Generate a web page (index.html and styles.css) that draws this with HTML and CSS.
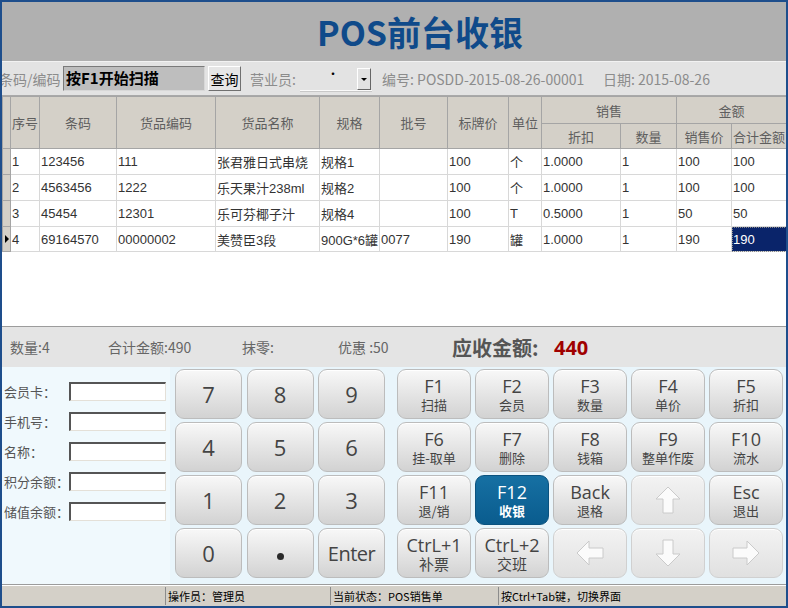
FILE: index.html
```html
<!DOCTYPE html>
<html lang="zh-CN">
<head>
  <meta charset="UTF-8">
  <title>POS前台收银</title>
  <link rel="stylesheet" href="styles.css">
</head>
<body>
<div class="ventana">
  <div class="cabecera"><h1>POS前台收银</h1></div>

  <div class="barra">
    <span class="lbl-codigo">条码/编码</span>
    <div class="caja-scan">按F1开始扫描</div>
    <button class="btn-consulta">查询</button>
    <span class="lbl-vendedor">营业员:</span>
    <div class="combo"><span class="combo-punto">·</span><span class="combo-btn"></span></div>
    <span class="lbl-numero">编号: POSDD-2015-08-26-00001</span>
    <span class="lbl-fecha">日期: 2015-08-26</span>
  </div>

  <div class="zona-tabla">
    <table class="tabla">
      <colgroup>
        <col style="width:8px"><col style="width:29px"><col style="width:77px"><col style="width:99px">
        <col style="width:104px"><col style="width:60px"><col style="width:68px"><col style="width:61px">
        <col style="width:33px"><col style="width:79px"><col style="width:56px"><col style="width:55px">
        <col style="width:55px">
      </colgroup>
      <thead>
        <tr class="h1">
          <th rowspan="2" class="ind"></th>
          <th rowspan="2">序号</th>
          <th rowspan="2">条码</th>
          <th rowspan="2">货品编码</th>
          <th rowspan="2">货品名称</th>
          <th rowspan="2">规格</th>
          <th rowspan="2">批号</th>
          <th rowspan="2">标牌价</th>
          <th rowspan="2">单位</th>
          <th colspan="2">销售</th>
          <th colspan="2">金额</th>
        </tr>
        <tr class="h2">
          <th>折扣</th>
          <th>数量</th>
          <th>销售价</th>
          <th>合计金额</th>
        </tr>
      </thead>
      <tbody>
        <tr>
          <td class="ind"></td><td>1</td><td>123456</td><td>111</td><td>张君雅日式串烧</td><td>规格1</td><td></td>
          <td>100</td><td>个</td><td>1.0000</td><td>1</td><td>100</td><td>100</td>
        </tr>
        <tr>
          <td class="ind"></td><td>2</td><td>4563456</td><td>1222</td><td>乐天果汁238ml</td><td>规格2</td><td></td>
          <td>100</td><td>个</td><td>1.0000</td><td>1</td><td>100</td><td>100</td>
        </tr>
        <tr>
          <td class="ind"></td><td>3</td><td>45454</td><td>12301</td><td>乐可芬椰子汁</td><td>规格4</td><td></td>
          <td>100</td><td>T</td><td>0.5000</td><td>1</td><td>50</td><td>50</td>
        </tr>
        <tr class="ultima">
          <td class="ind"><span class="flecha"></span></td><td>4</td><td>69164570</td><td>00000002</td><td>美赞臣3段</td><td>900G*6罐</td><td>0077</td>
          <td>190</td><td>罐</td><td>1.0000</td><td>1</td><td>190</td><td class="sel">190</td>
        </tr>
      </tbody>
    </table>
  </div>

  <div class="resumen">
    <span class="r-cant">数量:4</span>
    <span class="r-total">合计金额:490</span>
    <span class="r-redondeo">抹零:</span>
    <span class="r-desc">优惠 :50</span>
    <span class="r-cobrar">应收金额:</span>
    <span class="r-importe">440</span>
  </div>

  <div class="inferior">
    <div class="socio">
      <div class="fila"><label>会员卡：</label><input type="text"></div>
      <div class="fila"><label>手机号：</label><input type="text"></div>
      <div class="fila"><label>名称：</label><input type="text"></div>
      <div class="fila"><label>积分余额：</label><input type="text"></div>
      <div class="fila"><label>储值余额：</label><input type="text"></div>
    </div>
    <div class="teclado">
      <div class="numerico">
        <div class="tecla num">7</div>
        <div class="tecla num">8</div>
        <div class="tecla num">9</div>
        <div class="tecla num">4</div>
        <div class="tecla num">5</div>
        <div class="tecla num">6</div>
        <div class="tecla num">1</div>
        <div class="tecla num">2</div>
        <div class="tecla num">3</div>
        <div class="tecla num">0</div>
        <div class="tecla num"><span class="punto"></span></div>
        <div class="tecla num enter">Enter</div>
      </div>
      <div class="funciones">
        <div class="tecla"><span class="fk">F1</span><span class="sub">扫描</span></div>
        <div class="tecla"><span class="fk">F2</span><span class="sub">会员</span></div>
        <div class="tecla"><span class="fk">F3</span><span class="sub">数量</span></div>
        <div class="tecla"><span class="fk">F4</span><span class="sub">单价</span></div>
        <div class="tecla"><span class="fk">F5</span><span class="sub">折扣</span></div>
        <div class="tecla"><span class="fk">F6</span><span class="sub">挂-取单</span></div>
        <div class="tecla"><span class="fk">F7</span><span class="sub">删除</span></div>
        <div class="tecla"><span class="fk">F8</span><span class="sub">钱箱</span></div>
        <div class="tecla"><span class="fk">F9</span><span class="sub">整单作废</span></div>
        <div class="tecla"><span class="fk">F10</span><span class="sub">流水</span></div>
        <div class="tecla"><span class="fk">F11</span><span class="sub">退/销</span></div>
        <div class="tecla activa"><span class="fk">F12</span><span class="sub">收银</span></div>
        <div class="tecla"><span class="fk">Back</span><span class="sub">退格</span></div>
        <div class="tecla flecha-btn">
          <svg width="28" height="30" viewBox="0 0 28 30"><polygon points="14,2 26,14 19,14 19,28 9,28 9,14 2,14" fill="#fbfbfb" stroke="#cacaca"/></svg>
        </div>
        <div class="tecla"><span class="fk">Esc</span><span class="sub">退出</span></div>
        <div class="tecla ctrl"><span class="fk">CtrL+1</span><span class="sub">补票</span></div>
        <div class="tecla ctrl"><span class="fk">CtrL+2</span><span class="sub">交班</span></div>
        <div class="tecla flecha-btn">
          <svg width="30" height="28" viewBox="0 0 30 28"><polygon points="2,14 14,2 14,9 28,9 28,19 14,19 14,26" fill="#fbfbfb" stroke="#cacaca"/></svg>
        </div>
        <div class="tecla flecha-btn">
          <svg width="28" height="30" viewBox="0 0 28 30"><polygon points="14,28 26,16 19,16 19,2 9,2 9,16 2,16" fill="#fbfbfb" stroke="#cacaca"/></svg>
        </div>
        <div class="tecla flecha-btn">
          <svg width="30" height="28" viewBox="0 0 30 28"><polygon points="28,14 16,2 16,9 2,9 2,19 16,19 16,26" fill="#fbfbfb" stroke="#cacaca"/></svg>
        </div>
      </div>
    </div>
  </div>

  <div class="estado">
    <div class="celda c1"></div>
    <div class="celda c2">操作员：管理员</div>
    <div class="celda c3">当前状态：POS销售单</div>
    <div class="celda c4">按Ctrl+Tab键，切换界面</div>
  </div>
</div>
</body>
</html>
```

FILE: styles.css
```css
* {
  box-sizing: border-box;
}

body {
  margin: 0;
  font-family: "Noto Sans CJK SC", "Liberation Sans", sans-serif;
}

.ventana {
  width: 788px;
  height: 608px;
  border: 2px solid #1e4e8c;
  display: flex;
  flex-direction: column;
  overflow: hidden;
  background: #fff;
}

/* cabecera */
.cabecera {
  height: 60px;
  background: #b0b0b0;
  border-bottom: 1px solid #f2f2f2;
  display: flex;
  align-items: center;
  justify-content: center;
  padding-left: 52px;
}

h1 {
  margin: 0;
  font-size: 34px;
  line-height: 1;
  font-weight: bold;
  color: #0f4a8a;
}

/* barra de busqueda */
.barra {
  height: 34px;
  background: #e3e3e3;
  border-bottom: 1px solid #a9a9a9;
  display: flex;
  align-items: center;
  font-size: 14px;
  color: #8c8c8c;
  white-space: nowrap;
}

.lbl-codigo {
  margin-left: -3px;
  width: 64px;
}

.caja-scan {
  width: 142px;
  height: 25px;
  background: #bebebe;
  border: 1px solid #7a7a7a;
  border-right-color: #d8d8d8;
  border-bottom-color: #d8d8d8;
  color: #000;
  font-weight: bold;
  font-size: 15px;
  line-height: 22px;
  padding-left: 2px;
}

.btn-consulta {
  margin-left: 3px;
  width: 33px;
  height: 25px;
  padding: 0;
  font-family: inherit;
  font-size: 14px;
  color: #000;
  background: #e6e6e6;
  border: 1px solid;
  border-color: #fff #707070 #707070 #fff;
}

.lbl-vendedor {
  margin-left: 9px;
  width: 50px;
}

.combo {
  position: relative;
  width: 72px;
  height: 24px;
  border-bottom: 1px solid #fafafa;
  box-shadow: 0 1px 0 #c8c8c8;
}

.combo-punto {
  position: absolute;
  left: 27px;
  top: -2px;
  color: #000;
  font-size: 12px;
}

.combo-btn {
  position: absolute;
  right: 1px;
  top: 1px;
  width: 14px;
  height: 22px;
  background: #e2e2e2;
  border: 1px solid;
  border-color: #fff #666 #666 #fff;
}

.combo-btn::after {
  content: "";
  position: absolute;
  left: 3px;
  top: 9px;
  border-left: 3px solid transparent;
  border-right: 3px solid transparent;
  border-top: 3px solid #000;
}

.lbl-numero {
  margin-left: 10px;
  width: 221px;
}

/* tabla */
.zona-tabla {
  height: 230px;
  background: #fff;
}

.tabla {
  border-collapse: collapse;
  table-layout: fixed;
  width: 784px;
  font-family: "Liberation Sans", "Noto Sans CJK SC", sans-serif;
  font-size: 13px;
}

.tabla th {
  background: #d4d0c8;
  color: #5e5e5e;
  font-weight: normal;
  border: 1px solid #a5a5a5;
  padding: 0;
  white-space: nowrap;
  font-family: "Noto Sans CJK SC", sans-serif;
}

.tabla tr.h1 th {
  height: 27px;
}

.tabla tr.h2 th {
  height: 25px;
}

.tabla td {
  border: 1px solid #d8d8d8;
  height: 26px;
  padding: 0 0 0 1px;
  color: #333;
  white-space: nowrap;
  overflow: hidden;
}

.tabla tr.ultima td {
  height: 25px;
}

.tabla .ind {
  background: #d4d0c8;
  border-color: #a5a5a5;
  padding: 0;
}

.flecha {
  display: block;
  margin-left: 2px;
  border-top: 4px solid transparent;
  border-bottom: 4px solid transparent;
  border-left: 4px solid #000;
  width: 0;
}

.tabla td.sel {
  background: #0a246a;
  color: #fff;
  outline: 1px dotted #8a8a8a;
  outline-offset: -1px;
}

/* resumen */
.resumen {
  height: 41px;
  background: #e4e4e4;
  border-top: 1px solid #9c9c9c;
  display: flex;
  align-items: center;
  padding-left: 8px;
  font-size: 14px;
  color: #666;
  white-space: nowrap;
}

.r-cant { width: 98px; }
.r-total { width: 134px; }
.r-redondeo { width: 96px; }
.r-desc { width: 114px; }

.r-cobrar {
  width: 102px;
  font-size: 20px;
  font-weight: bold;
  color: #555;
}

.r-importe {
  font-size: 20px;
  font-weight: bold;
  color: #a00000;
  font-family: "Open Sans", sans-serif;
}

/* zona inferior */
.inferior {
  height: 217px;
  display: flex;
  background: #e9f5fb;
}

.socio {
  width: 168px;
  background: #f0f9fd;
  padding-top: 14px;
}

.fila {
  display: flex;
  align-items: center;
  height: 20px;
  margin-bottom: 10px;
}

.fila label {
  width: 67px;
  padding-left: 2px;
  font-size: 13px;
  color: #555;
  white-space: nowrap;
}

.fila input {
  width: 97px;
  height: 19px;
  padding: 0;
  background: #fff;
  border: 1px solid;
  border-color: #555 #e4e0d8 #e4e0d8 #555;
  border-width: 2px 1px 1px 2px;
}

.teclado {
  flex: 1;
  display: flex;
  padding: 2px 3px 0 5px;
}

.numerico {
  display: grid;
  grid-template-columns: repeat(3, 67px);
  grid-template-rows: repeat(4, 50px);
  column-gap: 4.5px;
  row-gap: 3px;
}

.funciones {
  margin-left: 12px;
  display: grid;
  grid-template-columns: repeat(5, 74px);
  grid-template-rows: repeat(4, 50px);
  column-gap: 4px;
  row-gap: 3px;
}

.tecla {
  border: 1px solid #bcbcbc;
  border-radius: 9px;
  background: linear-gradient(#f8f8f8, #d2d2d2);
  box-shadow: inset 0 1px 0 #fff;
  color: #444;
  display: flex;
  flex-direction: column;
  align-items: center;
  justify-content: center;
  font-family: "Open Sans", "Noto Sans CJK SC", sans-serif;
}

.num {
  font-size: 22px;
}

.punto {
  width: 7px;
  height: 7px;
  border-radius: 50%;
  background: #2a2a2a;
  margin-top: 6px;
}

.enter {
  font-size: 20px;
  letter-spacing: -0.5px;
}

.fk {
  font-size: 18px;
  line-height: 20px;
}

.sub {
  font-size: 13px;
  line-height: 17px;
  font-family: "Noto Sans CJK SC", sans-serif;
}

.ctrl .fk {
  font-size: 18px;
}

.ctrl .sub {
  font-size: 15px;
}

.tecla.activa {
  background: linear-gradient(#1670a3, #0a5c8e);
  border-color: #0b527e;
  box-shadow: none;
  color: #fff;
}

.tecla.activa .sub {
  font-weight: bold;
}

.flecha-btn {
  background: linear-gradient(#f3f3f3, #e0e0e0);
  border-color: #d0d0d0;
}

/* barra de estado */
.estado {
  height: 22px;
  background: #d4d0c8;
  border-top: 1px solid #9c9c9c;
  box-shadow: inset 0 1px 0 #fff;
  display: flex;
  font-size: 11px;
  color: #000;
  padding-top: 2px;
}

.celda {
  height: 18px;
  line-height: 18px;
  padding-left: 2px;
  white-space: nowrap;
  border-left: 1px solid #8c8c8c;
}

.c1 { width: 163px; border-left: none; }
.c2 { width: 165px; }
.c3 { width: 168px; }
.c4 { flex: 1; }
```
